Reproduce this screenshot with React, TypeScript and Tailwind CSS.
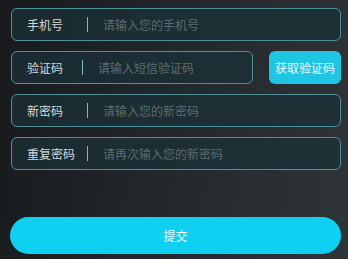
import React from "react";

const font = { fontFamily: '"Noto Sans CJK SC", "Noto Sans", sans-serif' };

function Field({ label, placeholder, divX, grow }: { label: string; placeholder: string; divX: string; grow?: boolean }) {
  return (
    <div
      className={`flex h-[33px] items-center rounded-[6px] border border-[#4f8f9a] bg-[#1b3036]/80 ${grow ? "flex-1" : "w-full"}`}
    >
      <span className={`${divX} shrink-0 pl-[15px] text-[12px] text-[#d3dadc]`}>{label}</span>
      <span className="h-[15px] w-px shrink-0 bg-[#7fb8c2]" />
      <span className="pl-[15px] text-[12px] text-[#5b6c71]">{placeholder}</span>
    </div>
  );
}

export default function App() {
  return (
    <div
      className="flex h-[259px] w-[348px] flex-col overflow-hidden bg-[linear-gradient(100deg,#17191c_0%,#22272b_45%,#2f3438_100%)] pl-[11px] pr-[7px] pt-[8px]"
      style={font}
    >
      <div className="flex flex-col gap-[10px]">
        <Field label="手机号" placeholder="请输入您的手机号" divX="w-[75px]" />
        <div className="flex gap-[16px]">
          <Field label="验证码" placeholder="请输入短信验证码" divX="w-[70px]" grow />
          <button className="flex h-[33px] w-[72px] items-center justify-center rounded-[6px] bg-[#1fc6e4] text-[12px] text-[#eaf8fb]">
            获取验证码
          </button>
        </div>
        <Field label="新密码" placeholder="请输入您的新密码" divX="w-[75px]" />
        <Field label="重复密码" placeholder="请再次输入您的新密码" divX="w-[75px]" />
      </div>
      <button className="-ml-px mt-[47px] flex h-[37px] w-[calc(100%+1px)] items-center justify-center rounded-full bg-[#0fd0f1] text-[12px] text-[#eef9fc]">
        提交
      </button>
    </div>
  );
}
